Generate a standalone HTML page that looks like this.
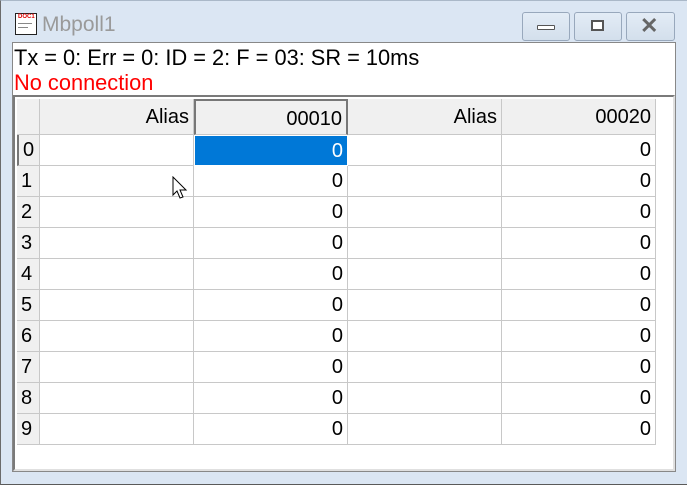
<!DOCTYPE html>
<html><head><style>
*{margin:0;padding:0;box-sizing:border-box}
body{width:687px;height:485px;overflow:hidden;background:#fff;font-family:"Liberation Sans",sans-serif;position:relative}
.abs{position:absolute}
#frame{left:0;top:0;width:687px;height:485px;background:#dbe6f3;border-left:1px solid #6b6b6b;border-bottom:1px solid #5a5a5a;border-top:1px solid #aab8c8}
.btn{top:12px;height:29px;border:1px solid #98a8bc;border-radius:3px;background:linear-gradient(#e3ecf6,#d3dfec)}
.cell{position:absolute;border-right:1px solid #c8c8c8;border-bottom:1px solid #c8c8c8;background:#fff;text-align:right;padding-right:4px;font-size:20px;line-height:31px;color:#000;white-space:nowrap}
.hdr{background:#f0f0f0}
.rh{background:#f0f0f0;text-align:left;padding-left:4px;padding-right:0}
</style></head><body>
<div id="frame" class="abs"></div>
<div class="abs" style="left:15px;top:13px;width:22px;height:22px;background:#fff;border:1px solid #222;"></div>
<div class="abs" style="left:18px;top:14px;font-size:6px;color:#d00;font-weight:bold">DOC1</div>
<div class="abs" style="left:18px;top:23px;width:14px;height:1px;background:#888"></div>
<div class="abs" style="left:18px;top:27px;width:10px;height:1px;background:#888"></div>
<div class="abs" style="left:42px;top:13px;font-size:21px;color:#9a9a9a">Mbpoll1</div>
<div class="abs btn" style="left:522px;width:48px"></div>
<div class="abs" style="left:537px;top:25px;width:18px;height:5px;background:#fff;border:1px solid #555;border-radius:1px"></div>
<div class="abs btn" style="left:574px;width:48px"></div>
<div class="abs" style="left:591px;top:20px;width:13px;height:11px;border:2px solid #555;background:#fff"></div>
<div class="abs btn" style="left:626px;width:49px"></div>
<div class="abs" style="left:640px;top:12px;font-size:22px;color:#666;font-weight:bold;line-height:28px">✕</div>
<div class="abs" style="left:12px;top:42px;width:664px;height:430px;background:#fff;border:1px solid #888"></div>
<div class="abs" style="left:14px;top:46px;font-size:21.8px;line-height:24px;color:#000;white-space:nowrap">Tx = 0: Err = 0: ID = 2: F = 03: SR = 10ms</div>
<div class="abs" style="left:14px;top:71px;font-size:21.8px;line-height:24px;color:#f00">No connection</div>
<div class="abs" style="left:13px;top:95px;width:662px;height:376px;border:2px solid #7a7a7a;border-right-color:#e0e0e0;border-bottom-color:#e0e0e0;outline:1px solid #aaa;outline-offset:-4px"></div>
<div class="abs" style="left:16px;top:98px;width:657px;height:370px;background:#fff"></div>
<div id="grid"></div>
<div class="cell hdr" style="left:17px;top:99px;width:23px;height:36px"></div>
<div class="cell hdr" style="left:40px;top:99px;width:154px;height:36px;line-height:36px">Alias</div>
<div class="cell hdr" style="left:194px;top:99px;width:154px;height:36px;line-height:36px;border-left:2px solid #777;border-top:2px solid #777;border-right:2px solid #777">00010</div>
<div class="cell hdr" style="left:348px;top:99px;width:154px;height:36px;line-height:36px">Alias</div>
<div class="cell hdr" style="left:502px;top:99px;width:154px;height:36px;line-height:36px">00020</div>
<script>
var g=document.getElementById('grid'),h='';
for(var r=0;r<10;r++){var y=135+r*31;
h+='<div class="cell rh" style="left:17px;top:'+y+'px;width:23px;height:31px;'+(r==0?'border-left:2px solid #777;':'')+'">'+r+'</div>';
h+='<div class="cell" style="left:40px;top:'+y+'px;width:154px;height:31px"></div>';
h+='<div class="cell" style="left:194px;top:'+y+'px;width:154px;height:31px;'+(r==0?'background:#0078d7;color:#fff;border:1px solid #fff;':'')+'">0</div>';
h+='<div class="cell" style="left:348px;top:'+y+'px;width:154px;height:31px"></div>';
h+='<div class="cell" style="left:502px;top:'+y+'px;width:154px;height:31px">0</div>';}
g.innerHTML=h;
</script>
<svg class="abs" style="left:172px;top:176px" width="16" height="26" viewBox="0 0 16 26"><path d="M1 1 L1 19 L5 15 L8 22 L11 21 L8 14 L14 14 Z" fill="#fff" stroke="#000" stroke-width="1"/></svg>
</body></html>
